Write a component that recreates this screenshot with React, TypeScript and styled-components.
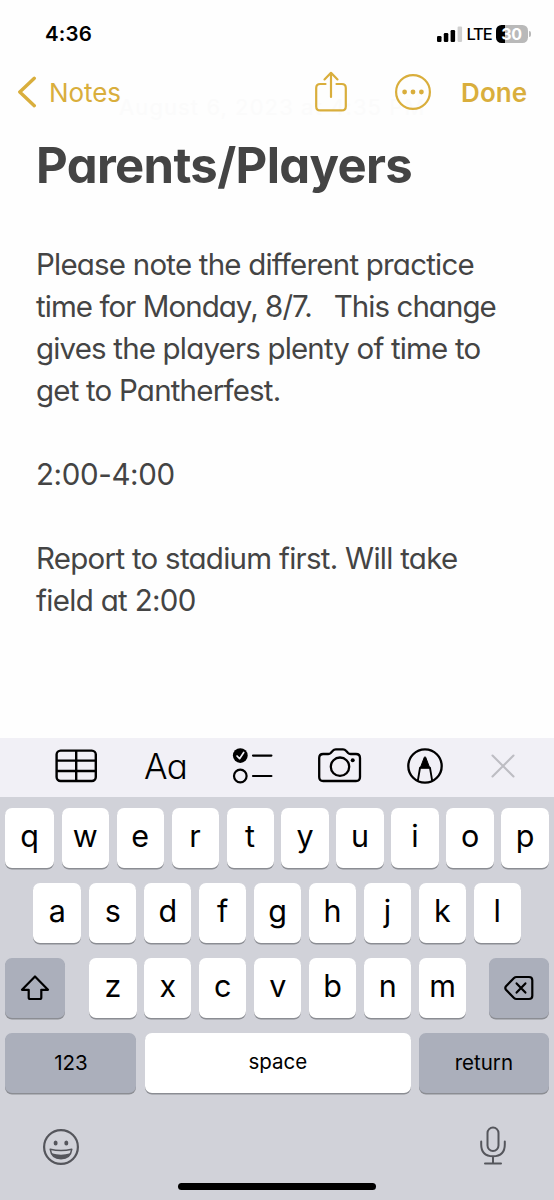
import React from "react";
import styled, { createGlobalStyle } from "styled-components";

const GOLD = "#d9ae3c";

const GlobalStyle = createGlobalStyle`
  *, *::before, *::after { box-sizing: border-box; }
  body { margin: 0; background: #fff; }
  svg { display: block; flex: none; }
  button { appearance: none; border: 0; padding: 0; margin: 0; background: none; font: inherit; color: inherit; }
`;

const Screen = styled.div`
  position: relative;
  display: flex;
  flex-direction: column;
  width: 554px;
  height: 1200px;
  overflow: hidden;
  background: #fefefe;
  color: #000;
  font-family: Inter, "Liberation Sans", sans-serif;
`;

const StatusBar = styled.header`
  display: flex;
  align-items: center;
  justify-content: space-between;
  height: 67px;
  padding: 0 23px 0 45px;
`;

const Clock = styled.span`
  font-size: 20.5px;
  font-weight: 600;
  line-height: 26px;
  letter-spacing: 0.2px;
`;

const StatusIcons = styled.div`
  display: flex;
  align-items: center;
`;

const Carrier = styled.span`
  margin: 1px 4.5px 0 4px;
  width: 24.5px;
  font-size: 16.5px;
  font-weight: 450;
  line-height: 20px;
  letter-spacing: -1.2px;
`;

const Battery = styled.div`
  width: 32px;
  height: 18px;
  border-radius: 5.5px;
  background: linear-gradient(to right, #000 9.5px, #b9b9b9 9.5px);
  color: #fff;
  font-size: 16px;
  font-weight: 700;
  line-height: 18.5px;
  text-align: center;
  letter-spacing: -0.3px;
`;

const BatteryTip = styled.span`
  width: 2px;
  height: 6px;
  margin-left: 1.5px;
  border-radius: 0 2px 2px 0;
  background: #b9b9b9;
`;

const NavBar = styled.nav`
  position: relative;
  display: flex;
  align-items: center;
  height: 50px;
  padding: 0 26px 0 17px;
  color: ${GOLD};
`;

const BackButton = styled.button`
  display: flex;
  align-items: center;
  gap: 12px;
  margin-right: auto;
  font-size: 26px;
  line-height: 32px;
  letter-spacing: -0.1px;
`;

const BackLabel = styled.span`
  padding-top: 1px;
`;

const ShareButton = styled.button`
  padding-bottom: 3px;
`;

const MoreButton = styled.button`
  margin-left: 46px;
`;

const DoneButton = styled.button`
  width: 67px;
  margin-left: 29px;
  padding-top: 1px;
  font-size: 26px;
  font-weight: 600;
  line-height: 32px;
  letter-spacing: 0.1px;
  text-align: left;
`;

const FadedDate = styled.time`
  position: absolute;
  top: 93px;
  left: 119px;
  color: #fbfbfb;
  font-size: 22px;
  line-height: 28px;
  letter-spacing: 1.1px;
  white-space: nowrap;
`;

const Note = styled.main`
  flex: 1;
  padding: 19px 36px 0;
  color: #444;
  font-feature-settings: "cv11";
`;

const Title = styled.h1`
  margin: 0 0 46.5px;
  font-size: 49px;
  font-weight: 700;
  line-height: 60px;
  letter-spacing: -0.65px;
  white-space: nowrap;
`;

const Line = styled.div<{ $spacing?: number }>`
  height: 42.05px;
  font-size: 29.5px;
  line-height: 42px;
  letter-spacing: ${(p) => p.$spacing ?? -0.8}px;
  white-space: pre;
`;

const Toolbar = styled.div`
  display: flex;
  align-items: center;
  height: 59px;
  padding: 0 38px 4px 54px;
  background: #f1f0f6;
`;

const Tool = styled.button<{ $gap?: number }>`
  margin-left: ${(p) => p.$gap ?? 0}px;
`;

const FormatLabel = styled.span`
  display: block;
  width: 43px;
  font-size: 35px;
  font-weight: 350;
  line-height: 40px;
  letter-spacing: -0.8px;
  font-feature-settings: "cv11";
`;

const Keyboard = styled.section`
  display: flex;
  flex-direction: column;
  gap: 15px;
  height: 403px;
  padding: 11px 5.4px 0;
  background: #d1d2d9;
`;

const KeyRow = styled.div<{ $inset?: number }>`
  display: flex;
  justify-content: space-between;
  gap: 7.8px;
  padding: 0 ${(p) => p.$inset ?? 0}px;
`;

const LetterGroup = styled.div`
  display: flex;
  gap: 7.8px;
  width: 376.8px;
  margin-left: 1.6px;
`;

const Key = styled.button`
  flex: 1 1 0;
  min-width: 0;
  height: 60px;
  padding-bottom: 5px;
  border-radius: 7px;
  background: #fff;
  box-shadow: 0 1.5px 0 #8b8d93;
  font-size: 30.5px;
  font-weight: 370;
  line-height: 55px;
  text-align: center;

  ${KeyRow} > &:first-child {
    flex-grow: 1.025;
  }
`;

const WideKey = styled(Key)<{ $width: number; $dark?: boolean }>`
  &&, ${KeyRow} > &&:first-child {
    flex: 0 0 ${(p) => p.$width}px;
  }
  display: flex;
  align-items: center;
  justify-content: center;
  padding-bottom: ${(p) => (p.$dark ? 0 : 2)}px;
  background: ${(p) => (p.$dark ? "#abafbb" : "#fff")};
  font-size: 20.5px;
  font-weight: 400;
  line-height: 26px;
  letter-spacing: 0;
`;

const KeyboardFooter = styled.div`
  display: flex;
  justify-content: space-between;
  align-items: flex-start;
  padding: 17.5px 41.5px 0 36.3px;
`;

const EmojiButton = styled.button`
  padding-top: 2px;
`;

const HomeIndicator = styled.div`
  align-self: center;
  width: 198px;
  height: 7px;
  margin-top: 2px;
  border-radius: 4px;
  background: #000;
`;

const SignalIcon = () => (
  <svg width="26" height="18" viewBox="0 0 26 18">
    <rect x="0" y="11" width="4.5" height="6" rx="1.2" />
    <rect x="6.8" y="8" width="4.5" height="9" rx="1.2" />
    <rect x="13.6" y="5" width="4.5" height="12" rx="1.2" />
    <rect x="20.6" y="1.5" width="4.5" height="15.5" rx="1.2" fill="#cfcfcf" />
  </svg>
);

const ChevronIcon = () => (
  <svg width="20" height="32" viewBox="0 0 20 32" fill="none" stroke={GOLD} strokeWidth="3.4" strokeLinecap="round" strokeLinejoin="round">
    <path d="M17.3 2.3 2.8 16 17.3 29.7" />
  </svg>
);

const ShareIcon = () => (
  <svg width="34" height="42" viewBox="0 0 34 42" fill="none" stroke={GOLD} strokeWidth="2.2" strokeLinecap="round" strokeLinejoin="round">
    <path d="M11.500 14H6.200Q2.200 14 2.200 18V36.400Q2.200 40.400 6.200 40.400H27.800Q31.800 40.400 31.800 36.400V18Q31.800 14 27.800 14H22.500" />
    <path d="M17 27V3.200M10.500 9.400 17 2.800 23.500 9.400" />
  </svg>
);

const MoreIcon = () => (
  <svg width="38" height="38" viewBox="0 0 38 38" fill="none" stroke={GOLD} strokeWidth="2.2">
    <circle cx="19" cy="19" r="16.9" />
    <g fill={GOLD} stroke="none">
      <circle cx="10.6" cy="19" r="2.4" />
      <circle cx="19" cy="19" r="2.4" />
      <circle cx="27.4" cy="19" r="2.4" />
    </g>
  </svg>
);

const TableIcon = () => (
  <svg width="44" height="36" viewBox="0 0 44 36" fill="none" stroke="#000" strokeWidth="2.4">
    <rect x="2.6" y="2.6" width="39.2" height="30.4" rx="4" />
    <path d="M2.6 12.6H41.8M2.6 23H41.8M22.2 2.6V33" />
  </svg>
);

const ChecklistIcon = () => (
  <svg width="42" height="38" viewBox="0 0 42 38" fill="none" stroke="#000" strokeWidth="2.2" strokeLinecap="round" strokeLinejoin="round">
    <circle cx="8.3" cy="8.6" r="7.4" fill="#000" stroke="none" />
    <path d="M5 9 7.6 11.7 11.7 5.5" stroke="#f1f0f6" strokeWidth="1.7" />
    <circle cx="8.3" cy="29" r="6.3" />
    <path d="M21 8.6H39.4M21 29H39.4" />
  </svg>
);

const CameraIcon = () => (
  <svg width="46" height="38" viewBox="0 0 46 38" fill="none" stroke="#000" strokeWidth="2.3" strokeLinejoin="round">
    <path d="M2.2 11Q2.2 7 6.2 7H11.2Q12.7 7 13.7 6L15.8 3.7Q17 2.3 18.8 2.3H26Q27.8 2.3 29 3.7L31.1 6Q32.1 7 33.6 7H39Q43 7 43 11V30Q43 34 39 34H6.2Q2.2 34 2.2 30Z" />
    <circle cx="23" cy="19.7" r="9.2" />
    <circle cx="35.7" cy="13.3" r="2" fill="#000" stroke="none" />
  </svg>
);

const MarkupIcon = () => (
  <svg width="38" height="38" viewBox="0 0 38 38" fill="none" stroke="#000" strokeWidth="2.3" strokeLinejoin="round">
    <circle cx="19" cy="19" r="16.7" />
    <path d="M11.8 33.8 14 20.8H24L26.200 33.800" strokeWidth="1.9" />
    <path d="M14.300 20.800 18.200 10.600Q19 8.800 19.800 10.600L23.700 20.800Z" fill="#000" strokeWidth="1" />
  </svg>
);

const CloseIcon = () => (
  <svg width="26" height="26" viewBox="0 0 26 26" fill="none" stroke="#bdbdc3" strokeWidth="2.1" strokeLinecap="round">
    <path d="M2.5 2.5 23.5 23.5M23.5 2.5 2.5 23.5" />
  </svg>
);

const ShiftIcon = () => (
  <svg width="30" height="28" viewBox="0 0 30 28" fill="none" stroke="#000" strokeWidth="2.2" strokeLinejoin="round">
    <path d="M15 2.5 28 15.8H21.3V23.5Q21.3 25 19.8 25H10.2Q8.7 25 8.7 23.5V15.8H2Z" />
  </svg>
);

const DeleteIcon = () => (
  <svg width="30" height="26" viewBox="0 0 30 26" fill="none" stroke="#000" strokeWidth="2.2" strokeLinecap="round" strokeLinejoin="round">
    <path d="M12.5 2H25Q28.3 2 28.3 5.3V20.7Q28.3 24 25 24H12.5Q11 24 10 23L2 14.8Q.6 13 2 11.2L10 3Q11 2 12.5 2Z" />
    <path d="M12.6 8.4 21.4 17.6M21.4 8.4 12.6 17.6" />
  </svg>
);

const EmojiIcon = () => (
  <svg width="38" height="38" viewBox="0 0 38 38" fill="none" stroke="#55565c" strokeWidth="2.2">
    <circle cx="19" cy="19" r="16.9" />
    <ellipse cx="13.6" cy="15" rx="2" ry="2.5" fill="#55565c" stroke="none" />
    <ellipse cx="24.3" cy="15" rx="2" ry="2.5" fill="#55565c" stroke="none" />
    <path d="M8.2 21.2Q19 24 29.8 21.2Q28.5 30.8 19 30.8Q9.5 30.8 8.2 21.2Z" strokeWidth="1.5" strokeLinejoin="round" />
    <path d="M9.6 25.3Q19 28 28.4 25.3Q26 30.8 19 30.8Q12 30.8 9.6 25.3Z" fill="#55565c" stroke="none" />
  </svg>
);

const MicIcon = () => (
  <svg width="28" height="40" viewBox="0 0 28 40" fill="none" stroke="#55565c" strokeWidth="2" strokeLinecap="round">
    <rect x="8.5" y="1.5" width="11" height="23.5" rx="5.5" />
    <path d="M2.200 15.500V18.500Q2.200 30.300 14 30.300Q25.800 30.300 25.800 18.500V15.500M14 30.300V37.400M6 37.400H22" />
  </svg>
);

const noteLines: { text: string; spacing?: number }[] = [
  { text: "Please note the different practice", spacing: -0.79 },
  { text: "time for Monday, 8/7.   This change", spacing: -0.95 },
  { text: "gives the players plenty of time to", spacing: -0.83 },
  { text: "get to Pantherfest.", spacing: -0.8 },
  { text: "" },
  { text: "2:00-4:00", spacing: -0.38 },
  { text: "" },
  { text: "Report to stadium first. Will take", spacing: -0.73 },
  { text: "field at 2:00", spacing: -0.68 },
];

const letters = (row: string) => row.split("").map((l) => <Key key={l}>{l}</Key>);

export default function App() {
  return (
    <Screen>
      <GlobalStyle />
      <FadedDate>August 6, 2023 at 4:35 PM</FadedDate>
      <StatusBar>
        <Clock>4:36</Clock>
        <StatusIcons>
          <SignalIcon />
          <Carrier>LTE</Carrier>
          <Battery>30</Battery>
          <BatteryTip />
        </StatusIcons>
      </StatusBar>
      <NavBar>
        <BackButton>
          <ChevronIcon />
          <BackLabel>Notes</BackLabel>
        </BackButton>
        <ShareButton aria-label="Share"><ShareIcon /></ShareButton>
        <MoreButton aria-label="More"><MoreIcon /></MoreButton>
        <DoneButton>Done</DoneButton>
      </NavBar>
      <Note>
        <Title>Parents/Players</Title>
        {noteLines.map((line, i) => (
          <Line key={i} $spacing={line.spacing}>{line.text}</Line>
        ))}
      </Note>
      <Toolbar>
        <Tool aria-label="Table"><TableIcon /></Tool>
        <Tool $gap={46}><FormatLabel>Aa</FormatLabel></Tool>
        <Tool $gap={45} aria-label="Checklist"><ChecklistIcon /></Tool>
        <Tool $gap={43} aria-label="Camera"><CameraIcon /></Tool>
        <Tool $gap={43} aria-label="Markup"><MarkupIcon /></Tool>
        <Tool $gap={46} aria-label="Close"><CloseIcon /></Tool>
      </Toolbar>
      <Keyboard>
        <KeyRow>{letters("qwertyuiop")}</KeyRow>
        <KeyRow $inset={27.8}>{letters("asdfghjkl")}</KeyRow>
        <KeyRow>
          <WideKey $width={60} $dark aria-label="Shift"><ShiftIcon /></WideKey>
          <LetterGroup>{letters("zxcvbnm")}</LetterGroup>
          <WideKey $width={60} $dark aria-label="Delete"><DeleteIcon /></WideKey>
        </KeyRow>
        <KeyRow>
          <WideKey $width={131} $dark>123</WideKey>
          <WideKey $width={266.5}>space</WideKey>
          <WideKey $width={129.5} $dark>return</WideKey>
        </KeyRow>
        <KeyboardFooter>
          <EmojiButton aria-label="Emoji"><EmojiIcon /></EmojiButton>
          <MicIcon />
        </KeyboardFooter>
        <HomeIndicator />
      </Keyboard>
    </Screen>
  );
}
